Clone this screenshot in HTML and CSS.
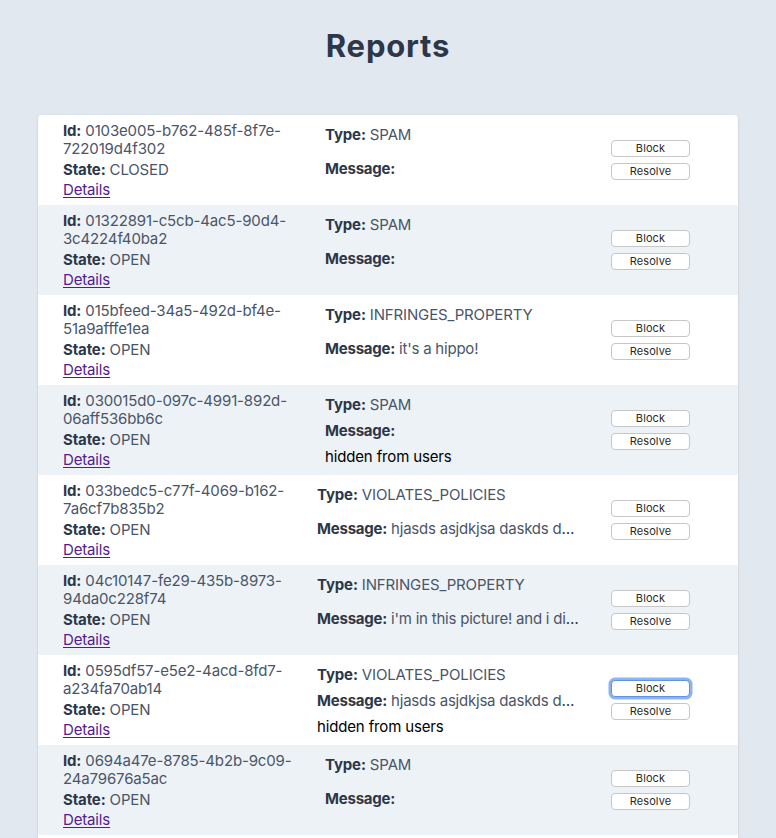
FILE: index.html
```html
<!DOCTYPE html>
<html lang="en">
<head>
<meta charset="utf-8">
<title>Reports</title>
<link rel="stylesheet" href="styles.css">
</head>
<body>
<main class="page">
  <h1 class="title">Reports</h1>
  <section class="reports">
    <article class="report">
      <div class="report__meta">
        <p class="meta-id"><span class="label">Id:</span> <span class="value">0103e005-b762-485f-8f7e-<wbr>722019d4f302</span></p>
        <p class="meta-state"><span class="label">State:</span> <span class="value">CLOSED</span></p>
        <p class="meta-link"><a href="#" class="details">Details</a></p>
      </div>
      <div class="report__info">
        <p class="info-line"><span class="label">Type:</span> <span class="value">SPAM</span></p>
        <p class="info-line info-line--message"><span class="label">Message:</span> <span class="value"></span></p>
      </div>
      <div class="report__actions">
        <button class="btn">Block</button>
        <button class="btn">Resolve</button>
      </div>
    </article>

    <article class="report">
      <div class="report__meta">
        <p class="meta-id"><span class="label">Id:</span> <span class="value">01322891-c5cb-4ac5-90d4-<wbr>3c4224f40ba2</span></p>
        <p class="meta-state"><span class="label">State:</span> <span class="value">OPEN</span></p>
        <p class="meta-link"><a href="#" class="details">Details</a></p>
      </div>
      <div class="report__info">
        <p class="info-line"><span class="label">Type:</span> <span class="value">SPAM</span></p>
        <p class="info-line info-line--message"><span class="label">Message:</span> <span class="value"></span></p>
      </div>
      <div class="report__actions">
        <button class="btn">Block</button>
        <button class="btn">Resolve</button>
      </div>
    </article>

    <article class="report">
      <div class="report__meta">
        <p class="meta-id"><span class="label">Id:</span> <span class="value">015bfeed-34a5-492d-bf4e-<wbr>51a9afffe1ea</span></p>
        <p class="meta-state"><span class="label">State:</span> <span class="value">OPEN</span></p>
        <p class="meta-link"><a href="#" class="details">Details</a></p>
      </div>
      <div class="report__info">
        <p class="info-line"><span class="label">Type:</span> <span class="value">INFRINGES_PROPERTY</span></p>
        <p class="info-line info-line--message"><span class="label">Message:</span> <span class="value">it's a hippo!</span></p>
      </div>
      <div class="report__actions">
        <button class="btn">Block</button>
        <button class="btn">Resolve</button>
      </div>
    </article>

    <article class="report">
      <div class="report__meta">
        <p class="meta-id"><span class="label">Id:</span> <span class="value">030015d0-097c-4991-892d-<wbr>06aff536bb6c</span></p>
        <p class="meta-state"><span class="label">State:</span> <span class="value">OPEN</span></p>
        <p class="meta-link"><a href="#" class="details">Details</a></p>
      </div>
      <div class="report__info report__info--flagged">
        <p class="info-line"><span class="label">Type:</span> <span class="value">SPAM</span></p>
        <p class="info-line info-line--message"><span class="label">Message:</span> <span class="value"></span></p>
        <p class="info-line flag">hidden from users</p>
      </div>
      <div class="report__actions">
        <button class="btn">Block</button>
        <button class="btn">Resolve</button>
      </div>
    </article>

    <article class="report">
      <div class="report__meta">
        <p class="meta-id"><span class="label">Id:</span> <span class="value">033bedc5-c77f-4069-b162-<wbr>7a6cf7b835b2</span></p>
        <p class="meta-state"><span class="label">State:</span> <span class="value">OPEN</span></p>
        <p class="meta-link"><a href="#" class="details">Details</a></p>
      </div>
      <div class="report__info">
        <p class="info-line"><span class="label">Type:</span> <span class="value">VIOLATES_POLICIES</span></p>
        <p class="info-line info-line--message"><span class="label">Message:</span> <span class="value">hjasds asjdkjsa daskds dasd</span></p>
      </div>
      <div class="report__actions">
        <button class="btn">Block</button>
        <button class="btn">Resolve</button>
      </div>
    </article>

    <article class="report">
      <div class="report__meta">
        <p class="meta-id"><span class="label">Id:</span> <span class="value">04c10147-fe29-435b-8973-<wbr>94da0c228f74</span></p>
        <p class="meta-state"><span class="label">State:</span> <span class="value">OPEN</span></p>
        <p class="meta-link"><a href="#" class="details">Details</a></p>
      </div>
      <div class="report__info">
        <p class="info-line"><span class="label">Type:</span> <span class="value">INFRINGES_PROPERTY</span></p>
        <p class="info-line info-line--message"><span class="label">Message:</span> <span class="value">i'm in this picture! and i didn't</span></p>
      </div>
      <div class="report__actions">
        <button class="btn">Block</button>
        <button class="btn">Resolve</button>
      </div>
    </article>

    <article class="report">
      <div class="report__meta">
        <p class="meta-id"><span class="label">Id:</span> <span class="value">0595df57-e5e2-4acd-8fd7-<wbr>a234fa70ab14</span></p>
        <p class="meta-state"><span class="label">State:</span> <span class="value">OPEN</span></p>
        <p class="meta-link"><a href="#" class="details">Details</a></p>
      </div>
      <div class="report__info report__info--flagged">
        <p class="info-line"><span class="label">Type:</span> <span class="value">VIOLATES_POLICIES</span></p>
        <p class="info-line info-line--message"><span class="label">Message:</span> <span class="value">hjasds asjdkjsa daskds dasd</span></p>
        <p class="info-line flag">hidden from users</p>
      </div>
      <div class="report__actions">
        <button class="btn btn--focused">Block</button>
        <button class="btn">Resolve</button>
      </div>
    </article>

    <article class="report">
      <div class="report__meta">
        <p class="meta-id"><span class="label">Id:</span> <span class="value">0694a47e-8785-4b2b-9c09-<wbr>24a79676a5ac</span></p>
        <p class="meta-state"><span class="label">State:</span> <span class="value">OPEN</span></p>
        <p class="meta-link"><a href="#" class="details">Details</a></p>
      </div>
      <div class="report__info">
        <p class="info-line"><span class="label">Type:</span> <span class="value">SPAM</span></p>
        <p class="info-line info-line--message"><span class="label">Message:</span> <span class="value"></span></p>
      </div>
      <div class="report__actions">
        <button class="btn">Block</button>
        <button class="btn">Resolve</button>
      </div>
    </article>

    <article class="report">
      <div class="report__meta">
        <p class="meta-id"><span class="label">Id:</span> <span class="value">07a1c3e2-4f6b-4d8e-a1b2-<wbr>9c3d5e7f8a90</span></p>
        <p class="meta-state"><span class="label">State:</span> <span class="value">OPEN</span></p>
        <p class="meta-link"><a href="#" class="details">Details</a></p>
      </div>
      <div class="report__info">
        <p class="info-line"><span class="label">Type:</span> <span class="value">SPAM</span></p>
        <p class="info-line info-line--message"><span class="label">Message:</span> <span class="value"></span></p>
      </div>
      <div class="report__actions">
        <button class="btn">Block</button>
        <button class="btn">Resolve</button>
      </div>
    </article>
  </section>
</main>
</body>
</html>
```
FILE: styles.css
```css
* {
  box-sizing: border-box;
}

html,
body {
  margin: 0;
  padding: 0;
}

body {
  background: #e2e8f0;
  font-family: Inter, "Noto Sans", "Liberation Sans", sans-serif;
  color: #2d3748;
}

p {
  margin: 0;
}

.page {
  padding-top: 28px;
}

.title {
  margin: 0 0 51px;
  text-align: center;
  font-size: 31px;
  line-height: 36px;
  font-weight: 700;
  letter-spacing: 0.8px;
  color: #2d3748;
}

.reports {
  width: 700px;
  margin: 0 auto;
  background: #fff;
  border-radius: 4px;
  box-shadow: 0 1px 3px rgba(0, 0, 0, 0.1), 0 1px 2px rgba(0, 0, 0, 0.06);
  overflow: hidden;
}

.report {
  display: flex;
  height: 90px;
  padding: 7px 48px 7px 25px;
  font-size: 15px;
  letter-spacing: -0.15px;
}

.report:nth-child(even) {
  background: #edf2f7;
}

.label {
  font-weight: 700;
  color: #2d3748;
}

.value {
  color: #4a5568;
}

.report__meta {
  flex: 0 1 262px;
  min-width: 0;
}

.meta-id {
  line-height: 18px;
}

.meta-state {
  margin-top: 2px;
  line-height: 20px;
}

.meta-link {
  line-height: 20px;
}

.details {
  color: #551a8b;
  text-decoration: underline;
  text-underline-offset: 2px;
}

.report__info {
  flex: 1 0 auto;
  display: flex;
  flex-direction: column;
  gap: 13.5px;
  padding: 3px 30px 0 0;
  line-height: 20px;
}

.report__info--flagged {
  gap: 6px;
  padding-top: 2.5px;
}

.info-line {
  white-space: nowrap;
}

.info-line--message {
  max-width: 264px;
  overflow: hidden;
  text-overflow: ellipsis;
  letter-spacing: -0.22px;
}

.flag {
  color: #000;
}

.report__actions {
  flex: 0 0 79px;
  align-self: center;
  display: flex;
  flex-direction: column;
  gap: 5.5px;
}

.btn {
  height: 17px;
  padding: 0;
  font-family: Inter, "Noto Sans", sans-serif;
  font-size: 11px;
  line-height: 15px;
  letter-spacing: 0.1px;
  color: #2b2b2b;
  background: #fff;
  border: 1px solid #c6c6c6;
  border-radius: 4px;
}

.btn--focused {
  border-color: #5f93e6;
  box-shadow: 0 0 0 2.5px #8db4f0;
}
```
